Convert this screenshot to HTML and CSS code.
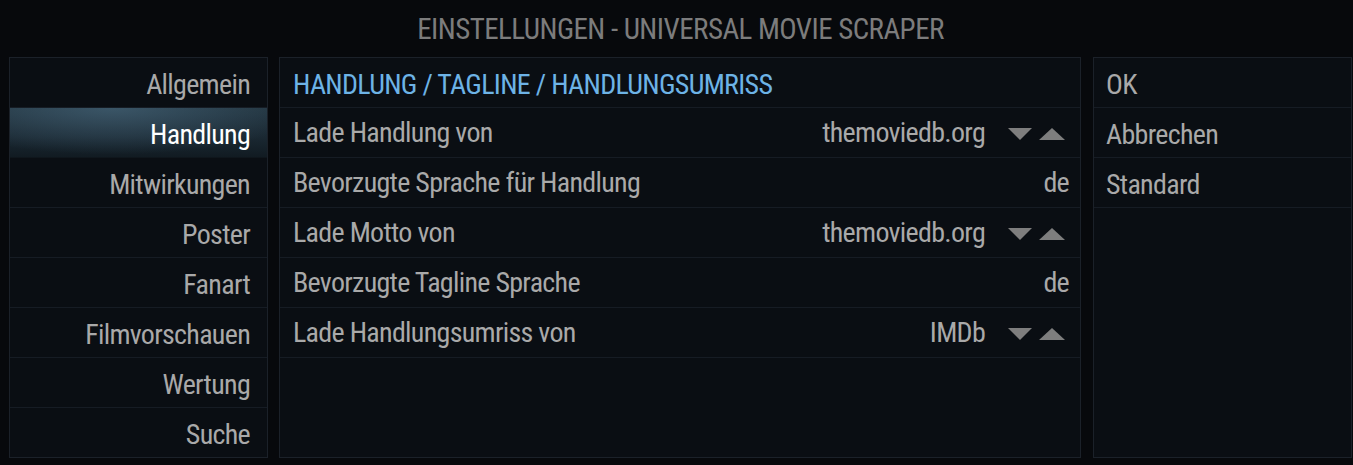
FILE: index.html
```html
<!DOCTYPE html>
<html lang="de">
<head>
<meta charset="utf-8">
<title>Einstellungen - Universal Movie Scraper</title>
<link rel="stylesheet" href="styles.css">
</head>
<body>
<div class="screen">
  <header class="title">EINSTELLUNGEN - UNIVERSAL MOVIE SCRAPER</header>
  <div class="panels">
    <nav class="panel side">
      <div class="row">Allgemein</div>
      <div class="row active">Handlung</div>
      <div class="row">Mitwirkungen</div>
      <div class="row">Poster</div>
      <div class="row">Fanart</div>
      <div class="row">Filmvorschauen</div>
      <div class="row">Wertung</div>
      <div class="row">Suche</div>
    </nav>
    <section class="panel main">
      <div class="row heading">HANDLUNG / TAGLINE / HANDLUNGSUMRISS</div>
      <div class="row setting">
        <span class="label">Lade Handlung von</span>
        <span class="value">themoviedb.org</span>
        <span class="spin"><span class="tri down"></span><span class="tri up"></span></span>
      </div>
      <div class="row setting">
        <span class="label">Bevorzugte Sprache für Handlung</span>
        <span class="value">de</span>
      </div>
      <div class="row setting">
        <span class="label">Lade Motto von</span>
        <span class="value">themoviedb.org</span>
        <span class="spin"><span class="tri down"></span><span class="tri up"></span></span>
      </div>
      <div class="row setting">
        <span class="label">Bevorzugte Tagline Sprache</span>
        <span class="value">de</span>
      </div>
      <div class="row setting">
        <span class="label">Lade Handlungsumriss von</span>
        <span class="value">IMDb</span>
        <span class="spin"><span class="tri down"></span><span class="tri up"></span></span>
      </div>
    </section>
    <aside class="panel actions">
      <div class="row">OK</div>
      <div class="row">Abbrechen</div>
      <div class="row">Standard</div>
    </aside>
  </div>
</div>
</body>
</html>
```
FILE: styles.css
```css
* { box-sizing: border-box; }
html, body {
  margin: 0;
  padding: 0;
  background: #07090c;
  width: 1353px;
  height: 465px;
  overflow: hidden;
}
.screen {
  font-family: "Roboto Condensed", Roboto, "Noto Sans", sans-serif;
  font-stretch: condensed;
  color: #a9a9a9;
  font-size: 28px;
  letter-spacing: -0.7px;
}
.title {
  height: 57px;
  line-height: 59px;
  text-align: center;
  color: #7c7c7c;
  font-size: 29px;
  letter-spacing: -0.55px;
  padding-left: 8px;
}
.panels {
  display: flex;
  padding-left: 9px;
  height: 401px;
}
.panel {
  background: #0a0e13;
  border: 1px solid #1b2129;
  height: 401px;
}
.side { width: 259px; margin-right: 11px; }
.main { width: 802px; margin-right: 12px; }
.actions { width: 259px; }
.row {
  height: 50px;
  line-height: 53px;
  border-bottom: 1px solid #161c24;
  white-space: nowrap;
}
.side .row {
  text-align: right;
  padding-right: 17px;
}
.side .row:last-child { border-bottom: none; }
.side .row.active {
  color: #ffffff;
  background:
    radial-gradient(ellipse 75% 95% at 40% 0%, rgba(75,108,130,0.6), rgba(75,108,130,0) 100%),
    linear-gradient(to bottom, #22343f 0%, #1a2832 60%, #111b22 100%);
  border-bottom-color: #0f161c;
}
.main .row { padding: 0 11px 0 13px; }
.heading {
  color: #6db3e6;
}
.setting {
  display: flex;
  align-items: center;
}
.setting .label { flex: 1; }
.spin {
  display: flex;
  align-items: center;
  margin-left: 23px;
  gap: 7px;
  margin-right: 4px;
  padding-top: 2px;
}
.tri {
  width: 0;
  height: 0;
  border-left: 13.5px solid transparent;
  border-right: 13.5px solid transparent;
}
.tri.down {
  border-top: 12px solid #7e7e7e;
  border-left-width: 12.5px;
  border-right-width: 12.5px;
}
.tri.up { border-bottom: 12px solid #7e7e7e; }
.actions .row { padding-left: 12px; }
```
